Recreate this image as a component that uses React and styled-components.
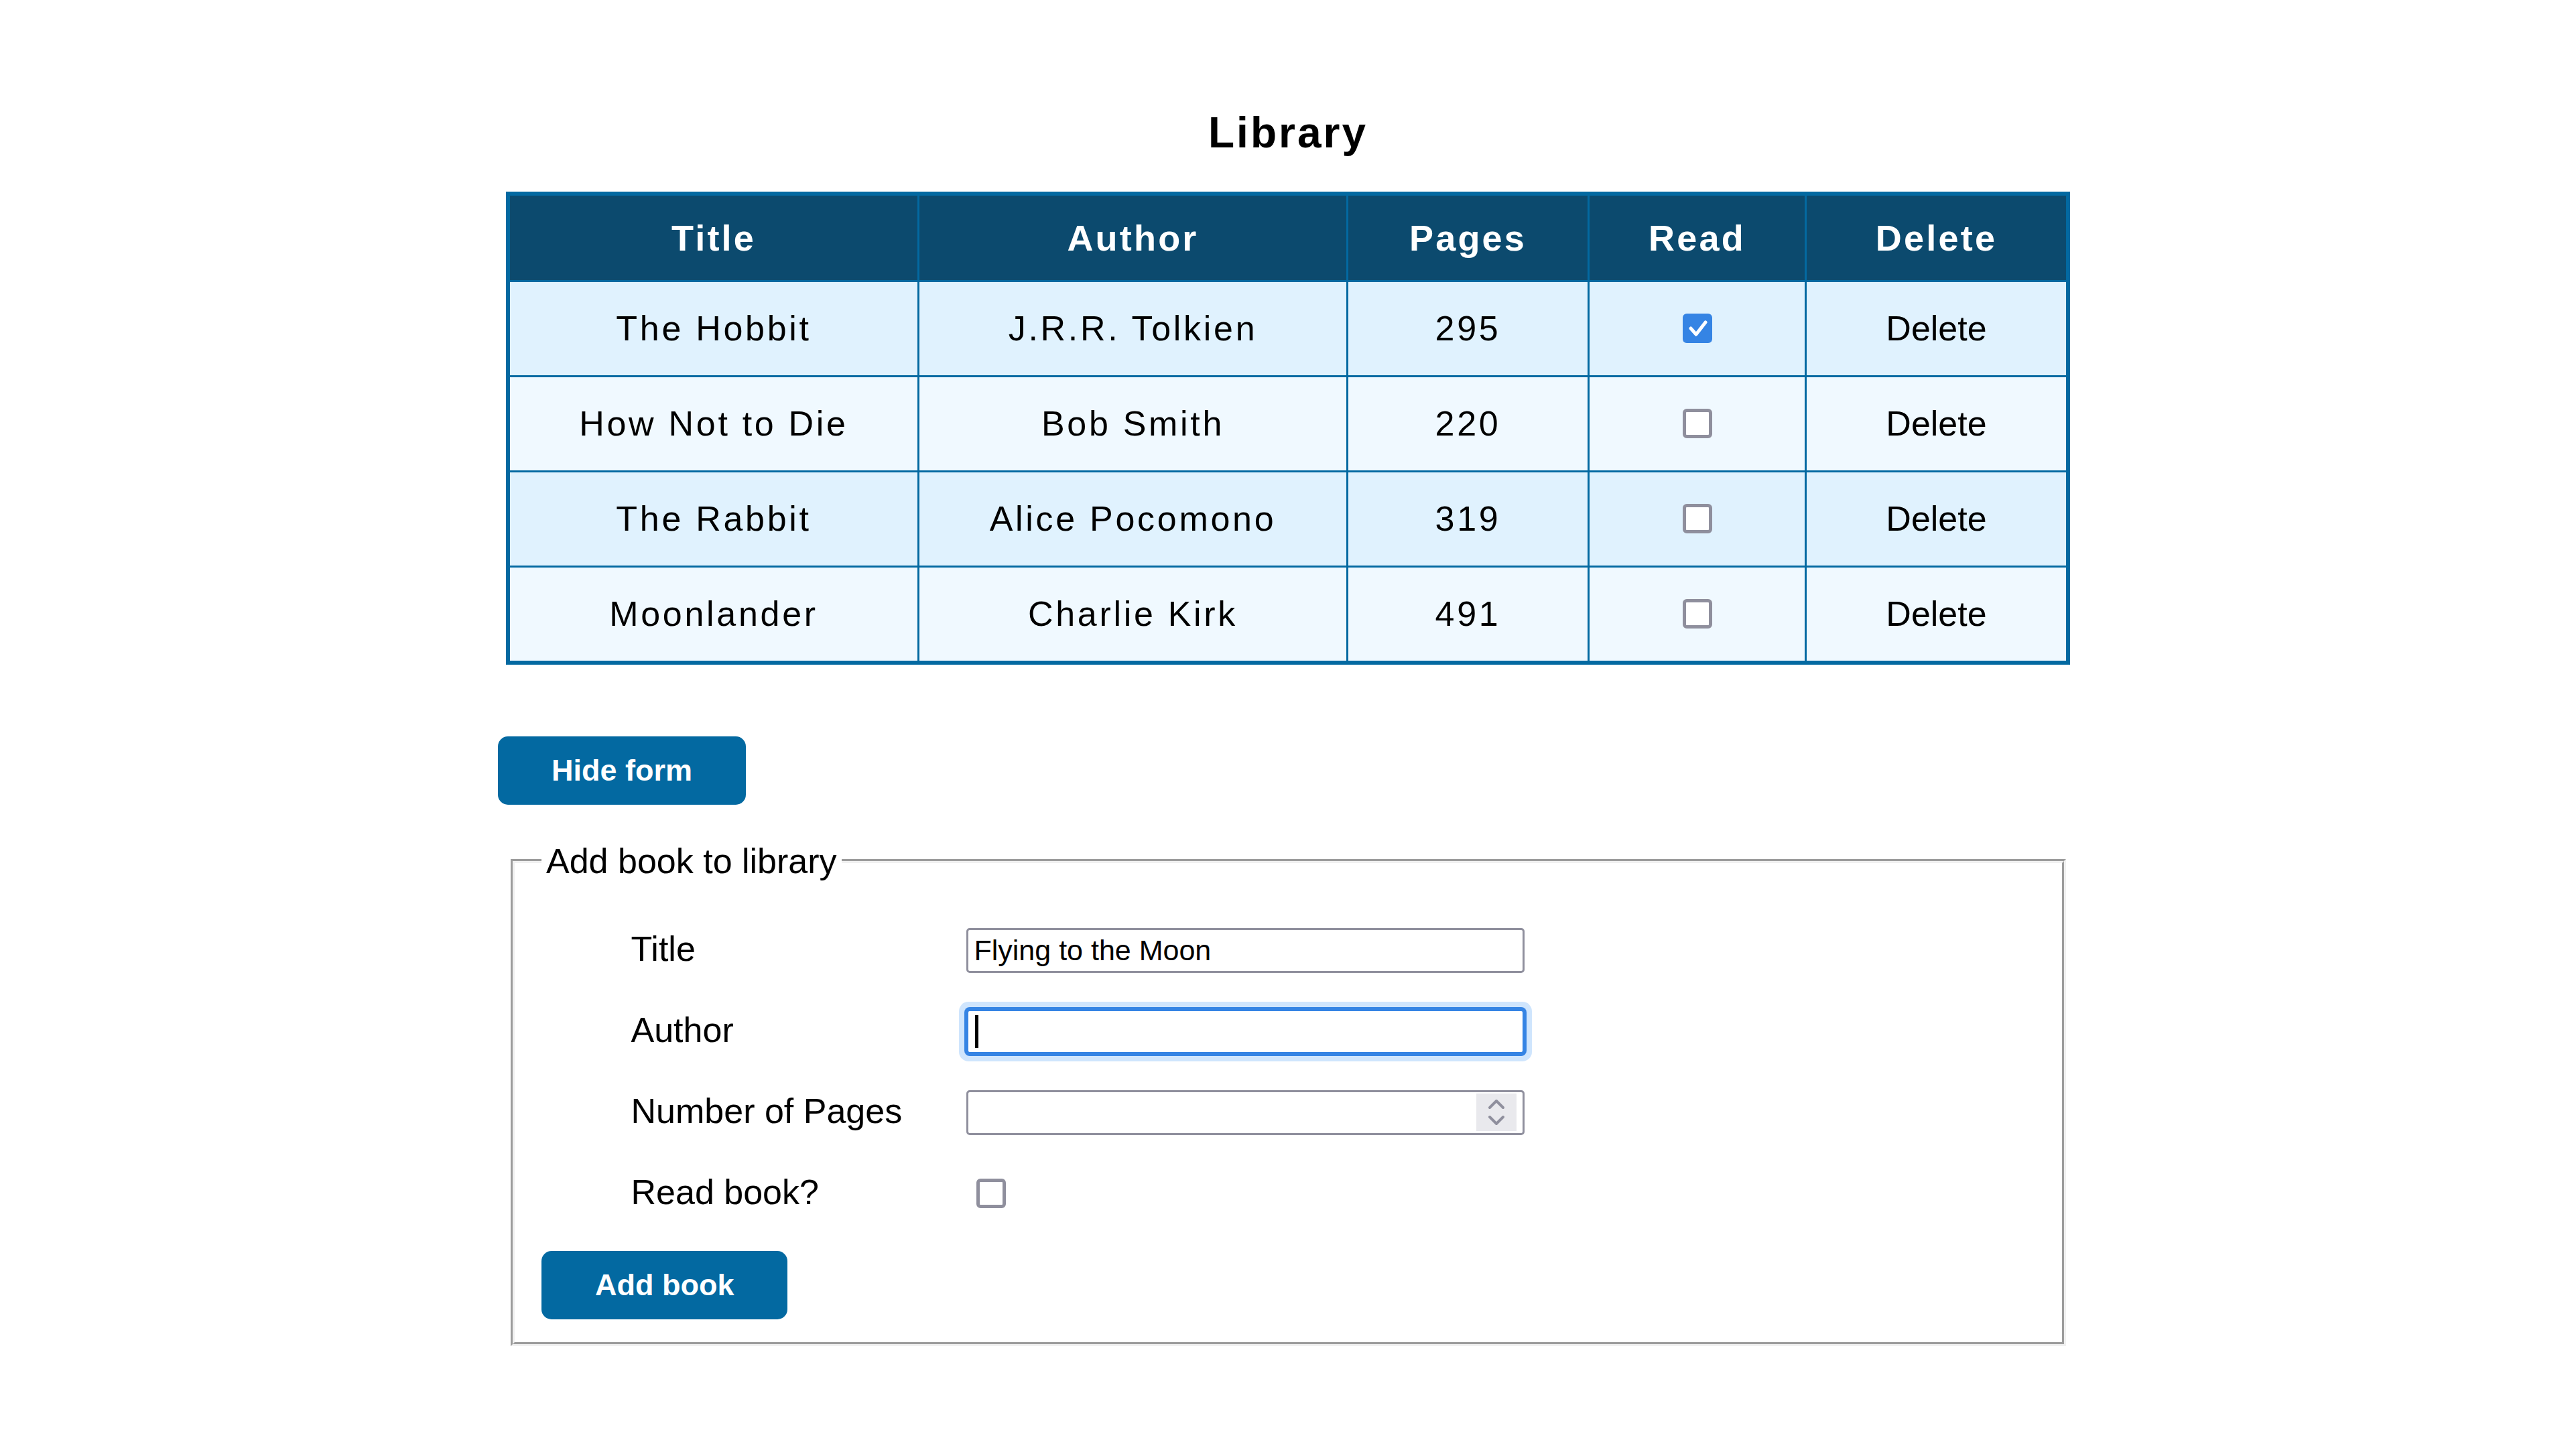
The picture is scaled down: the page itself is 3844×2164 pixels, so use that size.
import styled, { createGlobalStyle } from "styled-components";

const GlobalStyle = createGlobalStyle`
  body {
    margin: 0;
    background: #fff;
    font-family: "Liberation Sans", Arial, sans-serif;
    color: #000;
  }
`;

const books = [
  { title: "The Hobbit", author: "J.R.R. Tolkien", pages: 295, read: true },
  { title: "How Not to Die", author: "Bob Smith", pages: 220, read: false },
  { title: "The Rabbit", author: "Alice Pocomono", pages: 319, read: false },
  { title: "Moonlander", author: "Charlie Kirk", pages: 491, read: false },
];

const columns = [
  { label: "Title", width: 608 },
  { label: "Author", width: 637 },
  { label: "Pages", width: 357 },
  { label: "Read", width: 321 },
  { label: "Delete", width: 387 },
];

const checkSvg =
  "data:image/svg+xml,%3Csvg xmlns='http://www.w3.org/2000/svg' viewBox='0 0 44 44'%3E%3Cpath d='M12 22l8 9 14-18' fill='none' stroke='white' stroke-width='5' stroke-linecap='round' stroke-linejoin='round'/%3E%3C/svg%3E";

export default function App() {
  return (
    <>
      <GlobalStyle />
      <Page>
        <Container>
          <Heading>Library</Heading>

          <BookTable>
            <thead>
              <tr>
                {columns.map((c) => (
                  <HeadCell key={c.label} $w={c.width}>
                    {c.label}
                  </HeadCell>
                ))}
              </tr>
            </thead>
            <tbody>
              {books.map((b, i) => (
                <tr key={b.title}>
                  <Cell $alt={i % 2 === 1}>{b.title}</Cell>
                  <Cell $alt={i % 2 === 1}>{b.author}</Cell>
                  <Cell $alt={i % 2 === 1}>{b.pages}</Cell>
                  <Cell $alt={i % 2 === 1}>
                    <Checkbox $centered defaultChecked={b.read} />
                  </Cell>
                  <Cell $alt={i % 2 === 1}>
                    <DeleteButton>Delete</DeleteButton>
                  </Cell>
                </tr>
              ))}
            </tbody>
          </BookTable>

          <ActionButton $top={107} $left={-12}>
            Hide form
          </ActionButton>

          <Fieldset>
            <Legend>Add book to library</Legend>
            <FieldGrid>
              <Label>Title</Label>
              <FieldBox>
                <TextInput type="text" defaultValue="Flying to the Moon" />
              </FieldBox>

              <Label>Author</Label>
              <FieldBox $focused>
                <Caret />
                <TextInput type="text" />
              </FieldBox>

              <Label>Number of Pages</Label>
              <FieldBox>
                <TextInput type="number" />
                <Spinner>
                  <svg width="60" height="56" viewBox="0 0 60 56">
                    <path
                      d="M20 21l10-10 10 10M20 35l10 10 10-10"
                      fill="none"
                      stroke="#8f8f9d"
                      strokeWidth="4"
                      strokeLinecap="round"
                      strokeLinejoin="round"
                    />
                  </svg>
                </Spinner>
              </FieldBox>

              <Label>Read book?</Label>
              <Checkbox />
            </FieldGrid>

            <ActionButton $top={52} $left={0}>
              Add book
            </ActionButton>
          </Fieldset>
        </Container>
      </Page>
    </>
  );
}

const Page = styled.main`
  display: flex;
  justify-content: center;
  padding-top: 162px;
`;

const Container = styled.div`
  width: 2334px;
  display: flex;
  flex-direction: column;
`;

const Heading = styled.h1`
  margin: 0 0 50px;
  text-align: center;
  font-size: 64px;
  line-height: 73.5px;
  font-weight: 700;
  letter-spacing: 3px;
`;

const BookTable = styled.table`
  width: 2334px;
  table-layout: fixed;
  border: 3px solid #0369a1;
  border-spacing: 3px;
  background: #0369a1;
`;

const HeadCell = styled.th`
  width: ${(p) => p.$w}px;
  height: 126px;
  padding: 0;
  background: #0c4a6e;
  color: #fff;
  font-size: 54px;
  font-weight: 700;
  letter-spacing: 3.2px;
  text-align: center;
  vertical-align: middle;
`;

const Cell = styled.td`
  height: 139px;
  padding: 0;
  background: ${(p) => (p.$alt ? "#f0f9ff" : "#e0f2fe")};
  font-size: 52px;
  letter-spacing: 3.7px;
  text-align: center;
  vertical-align: middle;
`;

const DeleteButton = styled.button`
  padding: 0;
  border: 0;
  background: none;
  font-family: inherit;
  font-size: 52px;
  letter-spacing: 0;
  color: #000;
  cursor: pointer;
`;

const Checkbox = styled.input.attrs({ type: "checkbox" })`
  appearance: none;
  display: block;
  box-sizing: border-box;
  width: 44px;
  height: 44px;
  margin: ${(p) => (p.$centered ? "0 auto" : "0 0 0 15px")};
  justify-self: start;
  border: 5px solid #8f8f9d;
  border-radius: 6px;
  background: #fff;

  &:checked {
    border-color: #3584e4;
    background: #3584e4 url("${checkSvg}") center / 44px 44px no-repeat;
    background-origin: border-box;
  }
`;

const ActionButton = styled.button`
  align-self: flex-start;
  height: 102px;
  margin: ${(p) => p.$top}px 0 0 ${(p) => p.$left}px;
  padding: 0 80px;
  border: 0;
  border-radius: 15px;
  background: #0369a1;
  color: #fff;
  font-family: inherit;
  font-size: 45px;
  font-weight: 700;
  cursor: pointer;
`;

const Fieldset = styled.fieldset`
  display: flex;
  flex-direction: column;
  min-width: 0;
  margin: 54px 6px 0 7px;
  padding: 0 40px 34px;
  border: 6px groove #f0f0f0;
`;

const Legend = styled.legend`
  padding: 0 7px;
  font-size: 52px;
`;

const FieldGrid = styled.div`
  display: grid;
  grid-template-columns: 500px 833px;
  grid-auto-rows: 67px;
  row-gap: 54px;
  align-items: center;
  padding: 70px 0 0 133.5px;
`;

const Label = styled.label`
  padding-bottom: 5px;
  font-size: 52px;
`;

const FieldBox = styled.div`
  display: flex;
  align-items: center;
  box-sizing: border-box;
  height: 67px;
  padding: 0 9px;
  border: 3px solid ${(p) => (p.$focused ? "#3584e4" : "#8f8f9d")};
  border-radius: 5px;
  background: #fff;
  box-shadow: ${(p) =>
    p.$focused ? "0 0 0 3px #3584e4, 0 0 0 11px #cfe5fd" : "none"};
`;

const TextInput = styled.input`
  flex: 1;
  min-width: 0;
  padding: 0;
  border: 0;
  outline: none;
  background: transparent;
  font-family: inherit;
  font-size: 43px;
  color: #000;
  appearance: textfield;

  &::-webkit-inner-spin-button,
  &::-webkit-outer-spin-button {
    appearance: none;
    margin: 0;
  }
`;

const Caret = styled.span`
  flex: none;
  width: 5px;
  height: 49px;
  margin-left: 1px;
  background: #000;
`;

const Spinner = styled.div`
  flex: none;
  display: flex;
  width: 60px;
  height: 56px;
  background: #e9e9ed;
`;
